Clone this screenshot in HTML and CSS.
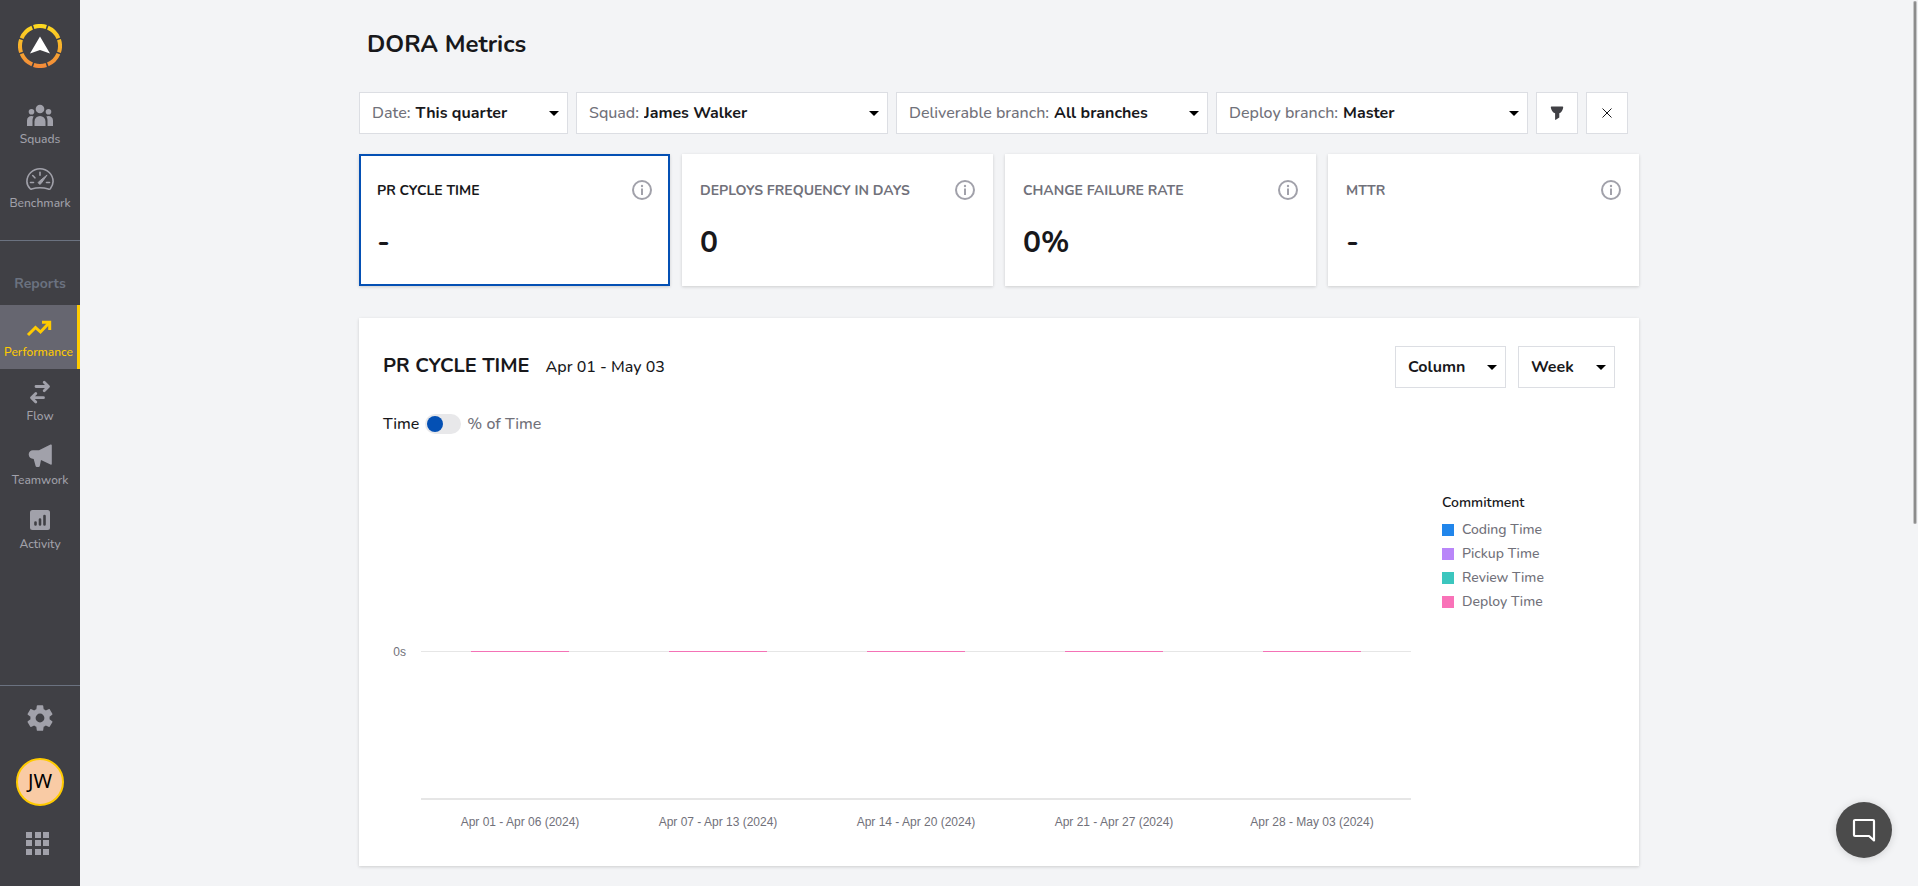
FILE: index.html
```html
<!DOCTYPE html>
<html lang="en">
<head>
  <meta charset="UTF-8" />
  <meta name="viewport" content="width=device-width, initial-scale=1.0" />
  <title>DORA Metrics</title>
  <link rel="stylesheet" href="styles.css">
</head>
<body>

  <aside class="sidebar">
    <a href="#" class="logo" aria-label="Home">
      <svg width="44" height="44" viewBox="0 0 44 44">
        <defs>
          <linearGradient id="ring" x1="0" y1="0" x2="0" y2="44" gradientUnits="userSpaceOnUse">
            <stop offset="0" stop-color="#fddb1f" />
            <stop offset="1" stop-color="#f3883a" />
          </linearGradient>
        </defs>
        <g fill="none" stroke="url(#ring)" stroke-width="4">
          <path d="M15.700 3a20 20 0 0 1 12.600 0M29.800 3.600a20 20 0 0 1 10.600 10.600M41 15.700a20 20 0 0 1 0 12.600M40.400 29.800a20 20 0 0 1-10.600 10.600M28.300 41a20 20 0 0 1-12.600 0M14.200 40.400a20 20 0 0 1-10.600-10.600M3 28.300a20 20 0 0 1 0-12.600M3.600 14.200a20 20 0 0 1 10.600-10.600" />
        </g>
        <path d="M22 12.5 32 29.5 22 26 12 29.5Z" fill="#fff" />
      </svg>
    </a>

    <nav class="menu">
      <a href="#" class="menu-item">
        <svg width="28" height="24" viewBox="0 0 28 24" fill="currentColor">
          <circle cx="14" cy="6" r="4.3" />
          <circle cx="5.5" cy="8.7" r="2.8" />
          <circle cx="22.5" cy="8.7" r="2.8" />
          <path d="M8.5 23v-4.500a5.500 5.500 0 0 1 11 0V23z" />
          <path d="M1 23v-5.500c0-3 2.200-4.500 4.500-4.500 1 0 1.500.200 2.200.600C6.700 15 6.500 16.500 6.500 18v5z" />
          <path d="M27 23v-5.500c0-3-2.200-4.500-4.500-4.500-1 0-1.500.200-2.200.600 1 1.400 1.200 2.900 1.200 4.400v5z" />
        </svg>
        <span>Squads</span>
      </a>
      <a href="#" class="menu-item">
        <svg width="28" height="24" viewBox="0 0 28 24" fill="none" stroke="currentColor" stroke-width="1.6" stroke-linecap="round">
          <path d="M4.200 21.800C2.300 19.800.900 17.500.900 14.500a13.100 12.800 0 0 1 26.200 0c0 3-1.400 5.300-2.800 7.300-.500.600-1.300.500-2 .200-5.200-1.600-11.400-1.600-16.600 0-.600.200-1.100.200-1.500-.200z" />
          <path d="M14 5.200v3M6.700 8.500l2.200 2.300M4.500 15.500h3M20.500 15.500h3" />
          <path d="M20.800 8.200l-7.500 6.100a1.500 1.500 0 1 0 2 2z" fill="currentColor" stroke-width="1" />
        </svg>
        <span>Benchmark</span>
      </a>
    </nav>

    <div class="menu-title">Reports</div>

    <nav class="menu">
      <a href="#" class="menu-item active">
        <svg width="28" height="24" viewBox="0 0 28 24" fill="none" stroke="currentColor" stroke-width="3">
          <path d="M3 19l7.500-7.500 5 4.500 8-8.500" />
          <path d="M17 6.300h7.700v7.700" />
        </svg>
        <span>Performance</span>
      </a>
      <a href="#" class="menu-item">
        <svg width="28" height="24" viewBox="0 0 28 24" fill="none" stroke="currentColor" stroke-width="2.800" stroke-linecap="round" stroke-linejoin="round">
          <path d="M10 6.500h12M18.200 2.200l4.300 4.300-4.300 4.300" />
          <path d="M17.500 17.700H6M9.800 13.400l-4.300 4.300 4.300 4.300" />
        </svg>
        <span>Flow</span>
      </a>
      <a href="#" class="menu-item">
        <svg width="28" height="24" viewBox="0 0 28 24" fill="currentColor">
          <path d="M2.700 10.600c0-2.600 1.800-4.400 4.200-4.400H13L24.500.600c.800-.400 1.300 0 1.300.700v18.600c0 .700-.600 1-1.300.600L15 15.900l-1.200 6c-.200.700-.700 1.100-1.400 1h-1.600c-.600 0-1-.400-1.200-1L7.700 15C4.700 15 2.700 13.200 2.700 10.600z" />
        </svg>
        <span>Teamwork</span>
      </a>
      <a href="#" class="menu-item">
        <svg width="28" height="24" viewBox="0 0 28 24">
          <rect x="4" y="2" width="20" height="20" rx="2.500" fill="currentColor" />
          <path d="M9.500 16.500v-2M14 16.500v-5M18.500 16.500V8" stroke="#404045" stroke-width="2.600" stroke-linecap="round" />
        </svg>
        <span>Activity</span>
      </a>
    </nav>

    <div class="sidebar-footer">
      <a href="#" aria-label="Settings">
        <svg width="32" height="32" viewBox="0 0 24 24" fill="currentColor">
          <path d="M19.140 12.940c.040-.300.060-.610.060-.940 0-.320-.020-.640-.070-.940l2.030-1.580c.180-.140.230-.410.120-.610l-1.920-3.320c-.120-.220-.370-.290-.590-.220l-2.390.960c-.500-.380-1.030-.700-1.620-.940L14.400 2.810c-.040-.240-.240-.410-.480-.410h-3.840c-.240 0-.430.170-.470.410L9.250 5.350c-.590.240-1.130.570-1.620.940L5.240 5.330c-.220-.080-.470 0-.590.220L2.740 8.870c-.120.210-.080.470.120.610l2.030 1.580c-.050.300-.090.630-.090.940s.020.640.070.940l-2.030 1.580c-.180.140-.230.410-.120.610l1.920 3.320c.120.220.370.290.590.220l2.390-.960c.500.380 1.030.700 1.620.940l.360 2.540c.050.240.240.410.480.410h3.840c.240 0 .440-.170.470-.410l.360-2.540c.590-.240 1.130-.560 1.620-.940l2.390.960c.220.080.470 0 .590-.220l1.920-3.320c.120-.220.070-.470-.120-.610zM12 15.300a3.300 3.300 0 1 1 0-6.600 3.300 3.300 0 0 1 0 6.600z" />
        </svg>
      </a>
      <a href="#" class="avatar">JW</a>
      <a href="#" class="apps" aria-label="Apps">
        <svg width="24" height="24" viewBox="0 0 24 24" fill="currentColor">
          <path d="M0 0h6v6H0zM9 0h6v6H9zM17 0h6v6h-6zM0 8h6v6H0zM9 8h6v6H9zM17 8h6v6h-6zM0 17h6v6H0zM9 17h6v6H9zM17 17h6v6h-6z" />
        </svg>
      </a>
    </div>
  </aside>

  <main class="page">
    <div class="container">
      <h1>DORA Metrics</h1>

      <!-- Filters -->
      <form class="filters">
        <div class="select-box date">
          <label for="date">Date:</label>
          <select id="date"><option>This quarter</option></select>
        </div>
        <div class="select-box">
          <label for="squad">Squad:</label>
          <select id="squad"><option>James Walker</option></select>
        </div>
        <div class="select-box">
          <label for="deliverable">Deliverable branch:</label>
          <select id="deliverable"><option>All branches</option></select>
        </div>
        <div class="select-box">
          <label for="deploy">Deploy branch:</label>
          <select id="deploy"><option>Master</option></select>
        </div>
        <button type="button" class="icon-button" aria-label="Filter">
          <svg width="14" height="14" viewBox="0 0 14 14" fill="#404045">
            <path d="M1.500.5h11c.500 0 .800.400.700.900C12.900 4 11.500 6.200 9.300 7.300V11.500L5.800 13.800c-.300.200-.700 0-.700-.400V7.300C2.600 6.200 1.200 4 .8 1.400.7.900 1 .5 1.500.5z" />
          </svg>
        </button>
        <button type="reset" class="icon-button" aria-label="Clear">
          <svg width="12" height="12" viewBox="0 0 12 12" stroke="#18181b" fill="none">
            <path d="M1.500 1.500l9 9M10.500 1.500l-9 9" />
          </svg>
        </button>
      </form>

      <!-- Metric cards -->
      <section class="cards">
        <article class="card selected">
          <div class="card-head">
            <h2>PR CYCLE TIME</h2>
            <button type="button" class="info" aria-label="Info"><svg width="20" height="20" viewBox="0 0 20 20"><use href="#info" /></svg></button>
          </div>
          <p class="value">-</p>
        </article>
        <article class="card">
          <div class="card-head">
            <h2>DEPLOYS FREQUENCY IN DAYS</h2>
            <button type="button" class="info" aria-label="Info"><svg width="20" height="20" viewBox="0 0 20 20"><use href="#info" /></svg></button>
          </div>
          <p class="value">0</p>
        </article>
        <article class="card">
          <div class="card-head">
            <h2>CHANGE FAILURE RATE</h2>
            <button type="button" class="info" aria-label="Info"><svg width="20" height="20" viewBox="0 0 20 20"><use href="#info" /></svg></button>
          </div>
          <p class="value">0%</p>
        </article>
        <article class="card">
          <div class="card-head">
            <h2>MTTR</h2>
            <button type="button" class="info" aria-label="Info"><svg width="20" height="20" viewBox="0 0 20 20"><use href="#info" /></svg></button>
          </div>
          <p class="value">-</p>
        </article>
      </section>

      <!-- Chart -->
      <section class="panel">
        <div class="panel-head">
          <div class="panel-title">
            <h2>PR CYCLE TIME</h2>
            <span class="period">Apr 01 - May 03</span>
          </div>
          <div class="select-box chart-type">
            <select aria-label="Chart type"><option>Column</option></select>
          </div>
          <div class="select-box interval">
            <select aria-label="Interval"><option>Week</option></select>
          </div>
        </div>

        <div class="toggle">
          <label for="unit">Time</label>
          <input type="checkbox" id="unit" />
          <label for="unit" class="muted">% of Time</label>
        </div>

        <div class="chart">
          <div class="y-axis">0s</div>
          <div class="plot">
            <div class="plot-area">
              <div class="bars">
                <i></i><i></i><i></i><i></i><i></i>
              </div>
            </div>
            <div class="x-axis">
              <span>Apr 01 - Apr 06 (2024)</span>
              <span>Apr 07 - Apr 13 (2024)</span>
              <span>Apr 14 - Apr 20 (2024)</span>
              <span>Apr 21 - Apr 27 (2024)</span>
              <span>Apr 28 - May 03 (2024)</span>
            </div>
          </div>
          <div class="legend">
            <h3>Commitment</h3>
            <ul>
              <li class="coding">Coding Time</li>
              <li class="pickup">Pickup Time</li>
              <li class="review">Review Time</li>
              <li class="deploy">Deploy Time</li>
            </ul>
          </div>
        </div>
      </section>
    </div>
  </main>

  <div class="scroll-thumb"></div>

  <button type="button" class="chat" aria-label="Chat">
    <svg width="24" height="24" viewBox="0 0 24 24" fill="none" stroke="#fff" stroke-width="2.200" stroke-linejoin="round">
      <path d="M3 2h18a1 1 0 0 1 1 1v19.500L17 18H3a1 1 0 0 1-1-1V3a1 1 0 0 1 1-1z" />
    </svg>
  </button>

  <svg class="symbols" width="0" height="0">
    <symbol id="info" viewBox="0 0 20 20">
      <circle cx="10" cy="10" r="9" fill="none" stroke="#a1a1aa" stroke-width="2" />
      <path d="M10 8.500v6.500" stroke="#a1a1aa" stroke-width="2" />
      <circle cx="10" cy="6" r="1.200" fill="#a1a1aa" />
    </symbol>
  </svg>

</body>
</html>
```

FILE: styles.css
```css
* {
  box-sizing: border-box;
  margin: 0;
  padding: 0;
}

body {
  display: flex;
  min-height: 100vh;
  font-family: Nunito, 'Open Sans', sans-serif;
  font-size: 16px;
  font-weight: 500;
  line-height: 20px;
  color: #18181b;
  background: #f3f4f6;
}

a {
  color: inherit;
  text-decoration: none;
}

button, select {
  font: inherit;
  color: inherit;
  cursor: pointer;
}

/* --- Sidebar --- */
.sidebar {
  position: sticky;
  top: 0;
  display: flex;
  flex-direction: column;
  flex: none;
  width: 80px;
  height: 100vh;
  background: #404045;
  color: #a1a1aa;
}

.logo {
  height: 92px;
  padding-top: 24px;
  text-align: center;
}

.menu-item {
  display: flex;
  flex-direction: column;
  align-items: center;
  gap: 4px;
  height: 64px;
  padding-top: 11px;
  font-size: 12px;
  line-height: 16px;
}

.menu-item.active {
  background: #666670;
  color: #ffcb00;
  border-right: 3px solid #ffcb00;
}

.menu-title {
  margin-top: 20px;
  padding-top: 33px;
  height: 65px;
  border-top: 1px solid #6b7280;
  color: #6b7280;
  font-size: 14px;
  font-weight: 700;
  text-align: center;
}

.sidebar-footer {
  display: flex;
  flex-direction: column;
  align-items: center;
  margin-top: auto;
  padding: 16px 0 30px;
  border-top: 1px solid #6b7280;
}

.sidebar-footer svg {
  display: block;
}

.avatar {
  width: 48px;
  height: 48px;
  margin: 24px 0 26px;
  border: 2px solid #ffcb00;
  border-radius: 50%;
  background: #f9cba5;
  color: #000;
  font: 20px/42px 'Noto Sans', sans-serif;
  text-align: center;
}

.apps {
  margin-right: 4px;
}

/* --- Page --- */
.page {
  flex: 1;
  min-width: 0;
}

.container {
  max-width: 1280px;
  margin: 0 auto;
  padding: 28px 0 20px;
}

h1 {
  padding-left: 8px;
  font-size: 24px;
  line-height: 32px;
  font-weight: 700;
}

/* --- Filters --- */
.filters {
  display: flex;
  gap: 8px;
  margin: 32px 11px 20px 0;
}

.select-box {
  display: flex;
  align-items: center;
  gap: 5px;
  flex: 1;
  height: 42px;
  padding: 0 8px 0 12px;
  background: #fff;
  border: 1px solid #dcdee3;
}

.select-box label {
  color: #71717a;
}

.select-box select {
  flex: 1;
  min-width: 0;
  appearance: none;
  background: none;
  border: 0;
  font-weight: 700;
}

.select-box::after {
  content: "";
  border: 5px solid transparent;
  border-top-color: #000;
  border-bottom: 0;
}

.select-box.date {
  flex: none;
  width: 209px;
}

.icon-button {
  display: flex;
  align-items: center;
  justify-content: center;
  width: 42px;
  height: 42px;
  background: #fff;
  border: 1px solid #dcdee3;
}

/* --- Cards --- */
.cards {
  display: grid;
  grid-template-columns: repeat(4, 1fr);
  gap: 12px;
  margin-bottom: 32px;
}

.card {
  height: 132px;
  padding: 24px 16px;
  background: #fff;
  border: 2px solid #fff;
  box-shadow: 0 1px 3px rgba(0, 0, 0, 0.16);
}

.card.selected {
  border-color: #0450b4;
}

.card-head {
  display: flex;
  justify-content: space-between;
  align-items: flex-start;
}

.card h2 {
  font-size: 14px;
  line-height: 22px;
  font-weight: 700;
  color: #71717a;
}

.card.selected h2 {
  color: #18181b;
}

.info {
  height: 20px;
  background: none;
  border: 0;
}

.value {
  margin-top: 21px;
  font-size: 30px;
  line-height: 40px;
  font-weight: 700;
}

/* --- Chart panel --- */
.panel {
  padding: 28px 24px 24px;
  background: #fff;
  box-shadow: 0 1px 3px rgba(0, 0, 0, 0.16);
}

.panel-head {
  display: flex;
  align-items: center;
}

.panel-title {
  display: flex;
  align-items: baseline;
  flex: 1;
  gap: 16px;
  padding-bottom: 2px;
}

.panel h2 {
  font-size: 20px;
  font-weight: 700;
}

.chart-type {
  flex: none;
  width: 111px;
  margin-right: 12px;
}

.interval {
  flex: none;
  width: 97px;
}

.toggle {
  display: flex;
  align-items: center;
  gap: 6px;
  margin-top: 26px;
}

.toggle input {
  appearance: none;
  width: 36px;
  height: 20px;
  padding: 2px;
  border-radius: 10px;
  background: #e8e8ea;
  cursor: pointer;
}

.toggle input::before {
  content: "";
  display: block;
  width: 16px;
  height: 16px;
  border-radius: 50%;
  background: #0450b4;
}

.toggle input:checked::before {
  margin-left: 16px;
}

.muted {
  color: #71717a;
}

.chart {
  display: flex;
  min-height: 408px;
}

.y-axis {
  width: 38px;
  padding: 208px 15px 0 0;
  color: #71717a;
  font: 12px/20px 'Liberation Sans', sans-serif;
  text-align: right;
}

.plot {
  flex: 1;
}

.plot-area {
  height: 366px;
  padding-top: 217px;
  border-bottom: 2px solid #e6e6e6;
}

.bars {
  display: grid;
  grid-template-columns: repeat(5, 1fr);
  justify-items: center;
  height: 1px;
  background: #e6e6e6;
}

.bars i {
  width: 49%;
  background: #f472b6;
}

.x-axis {
  display: grid;
  grid-template-columns: repeat(5, 1fr);
  padding-top: 12px;
  color: #71717a;
  font: 12px/20px 'Liberation Sans', sans-serif;
  text-align: center;
}

.legend {
  width: 173px;
  margin-left: 31px;
  padding-top: 59px;
  font-size: 14px;
}

.legend h3 {
  margin-bottom: 5px;
  font-size: 14px;
  font-weight: 600;
}

.legend ul {
  list-style: none;
}

.legend li {
  display: flex;
  align-items: center;
  gap: 8px;
  height: 24px;
  line-height: 22px;
  color: #71717a;
}

.legend li::before {
  content: "";
  width: 12px;
  height: 12px;
}

.coding::before {
  background: #2186eb;
}

.pickup::before {
  background: #b986f9;
}

.review::before {
  background: #3bc6be;
}

.deploy::before {
  background: #f972b8;
}

/* --- Overlays --- */
.scroll-thumb {
  position: fixed;
  top: 1px;
  right: 1px;
  width: 4px;
  height: 59vh;
  border-radius: 2px;
  background: #8c8c8c;
  border: solid #c4c5c6;
  border-width: 0 1px;
}

.chat {
  position: fixed;
  right: 26px;
  bottom: 28px;
  display: flex;
  align-items: center;
  justify-content: center;
  width: 56px;
  height: 56px;
  border: 0;
  border-radius: 50%;
  background: #4b4b4b;
  box-shadow: 0 1px 8px rgba(0, 0, 0, 0.15);
}

.symbols {
  position: absolute;
}
```
